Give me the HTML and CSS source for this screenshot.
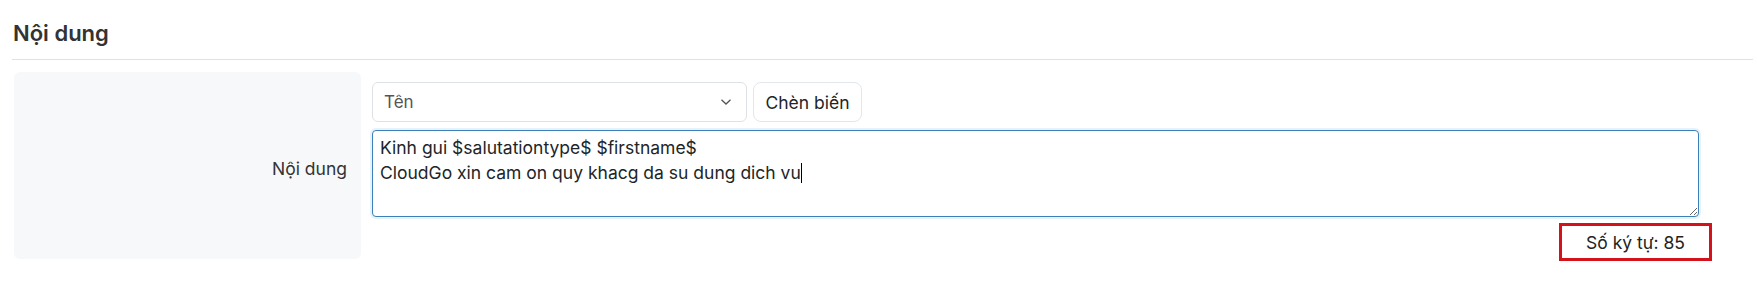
FILE: index.html
```html
<!DOCTYPE html>
<html lang="vi">
<head>
<meta charset="utf-8">
<title>Nội dung</title>
<link rel="stylesheet" href="styles.css">
</head>
<body>
<div class="page">
  <div class="section-head">
    <h2 class="title">Nội dung</h2>
  </div>
  <div class="field-row">
    <div class="label-cell"><span class="label">Nội dung</span></div>
    <div class="field-cell">
      <div class="tools">
        <div class="select">
          <span class="select-text">Tên</span>
          <svg class="chev" width="12" height="8" viewBox="0 0 12 8"><path d="M1.5 1.8 L6 6 L10.5 1.8" fill="none" stroke="#555" stroke-width="1.3"/></svg>
        </div>
        <button class="btn" type="button">Chèn biến</button>
      </div>
      <div class="editor" role="textbox" aria-multiline="true">Kinh gui $salutationtype$ $firstname$<br>CloudGo xin cam on quy khacg da su dung dich vu<span class="caret"></span></div>
      <div class="counter">Số ký tự: 85</div>
    </div>
  </div>
</div>
</body>
</html>
```
FILE: styles.css
```css
html, body {
  margin: 0;
  padding: 0;
  background: #fff;
}
body {
  font-family: Inter, "Noto Sans", "Liberation Sans", sans-serif;
  color: #333;
}
.page {
  padding: 14px 4px 0 12px;
}
.section-head {
  border-bottom: 1px solid #dee2e6;
  padding: 0 0 7px 0;
}
.title {
  margin: 0;
  padding-left: 1px;
  font-size: 22px;
  font-weight: 600;
  line-height: 38px;
  color: #333;
}
.field-row {
  display: flex;
  align-items: flex-start;
  gap: 11px;
  margin-top: 12px;
  padding-left: 2px;
}
.label-cell {
  width: 347px;
  height: 187px;
  box-sizing: border-box;
  background: #f7f8fa;
  border-radius: 6px;
  display: flex;
  align-items: center;
  justify-content: flex-end;
  padding: 5px 14px 0 0;
}
.label {
  font-size: 17.5px;
  color: #333;
}
.field-cell {
  width: 1340px;
  padding-top: 10px;
  display: flex;
  flex-direction: column;
}
.tools {
  display: flex;
  gap: 6px;
}
.select {
  width: 375px;
  height: 40px;
  box-sizing: border-box;
  border: 1px solid #dee2e6;
  border-radius: 6px;
  display: flex;
  align-items: center;
  justify-content: space-between;
  padding: 0 14px 0 11px;
  background: #fff;
}
.select-text {
  font-size: 17px;
  color: #555;
  margin-top: -1px;
}
.chev {
  display: block;
}
.btn {
  width: 109px;
  height: 40px;
  box-sizing: border-box;
  border: 1px solid #e3e6ea;
  border-radius: 8px;
  background: #fff;
  font-family: inherit;
  font-size: 17.5px;
  color: #212529;
  padding: 0;
}
.editor {
  margin-top: 8px;
  width: 1327px;
  height: 87px;
  box-sizing: border-box;
  border: 1px solid #3d7fb8;
  border-radius: 4px;
  box-shadow: 0 0 0 2px rgba(120, 190, 240, 0.18);
  padding: 4px 7px;
  font-size: 17.5px;
  line-height: 25px;
  color: #212529;
  overflow: auto;
  resize: both;
  background: #fff;
}
.caret {
  display: inline-block;
  width: 1px;
  height: 20px;
  background: #000;
  vertical-align: -4px;
}
.counter {
  align-self: flex-end;
  margin-top: 6px;
  width: 153px;
  height: 38px;
  box-sizing: border-box;
  border: 3px solid #d3121b;
  display: flex;
  align-items: center;
  justify-content: center;
  font-size: 17.5px;
  color: #222;
}
```
